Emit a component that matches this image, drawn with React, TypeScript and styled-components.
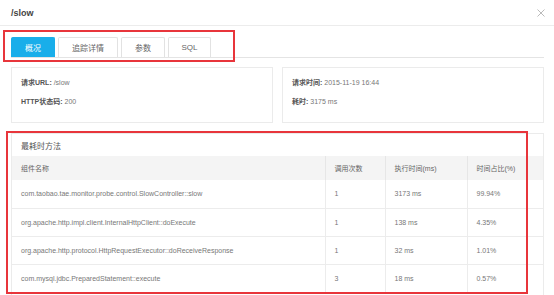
import React from "react";
import styled, { createGlobalStyle } from "styled-components";

const GlobalStyle = createGlobalStyle`
  html, body { margin: 0; padding: 0; background: #fff; }
  body { font-family: "Liberation Sans", "Noto Sans CJK SC", sans-serif; color: #666; }
  * { box-sizing: border-box; }
`;

const Modal = styled.div`
  position: relative;
  width: 554px;
  height: 295px;
  overflow: hidden;
  background: #fff;
`;

const Header = styled.div`
  height: 26px;
  display: flex;
  align-items: center;
  justify-content: space-between;
  padding: 0 9px 0 11px;
  border-bottom: 1px solid #ececec;
`;

const Title = styled.div`
  font-size: 9px;
  font-weight: 600;
  color: #444;
`;

const Close = styled.svg`
  width: 8px;
  height: 8px;
  margin-top: 0px;
`;

const Body = styled.div`
  padding: 0 10px 0 11px;
`;

const TabBar = styled.div`
  margin-top: 11px;
  display: flex;
  gap: 3px;
  border-bottom: 1px solid #e4e4e4;
`;

const Tab = styled.div<{ $active?: boolean; $w: number }>`
  width: ${(p) => p.$w}px;
  height: 20px;
  display: flex;
  align-items: center;
  justify-content: center;
  font-size: 8px;
  border: 1px solid ${(p) => (p.$active ? "#19aeea" : "#e2e2e2")};
  border-bottom: none;
  border-radius: 2px 2px 0 0;
  background: ${(p) => (p.$active ? "#19aeea" : "#fff")};
  color: ${(p) => (p.$active ? "#fff" : "#666")};
`;

const InfoGrid = styled.div`
  margin-top: 9px;
  display: grid;
  grid-template-columns: 262px 262px;
  column-gap: 9px;
`;

const InfoCard = styled.div`
  height: 56px;
  border: 1px solid #ebebeb;
  padding: 9px 9px 0;
  display: flex;
  flex-direction: column;
  gap: 7px;
`;

const InfoLine = styled.div`
  font-size: 7px;
  line-height: 12px;
  color: #777;
  white-space: nowrap;
`;

const Label = styled.span`
  font-weight: bold;
  color: #555;
`;

const TableCard = styled.div`
  margin-top: 10px;
  border: 1px solid #ebebeb;
  height: 170px;
`;

const CardTitle = styled.div`
  height: 22px;
  display: flex;
  align-items: center;
  padding-left: 9px;
  font-size: 8px;
  color: #555;
`;

const Table = styled.table`
  width: 100%;
  border-collapse: collapse;
  table-layout: fixed;
  font-size: 7px;
`;

const Th = styled.th<{ $w: number }>`
  width: ${(p) => p.$w}px;
  height: 24px;
  padding: 0 0 0 9px;
  text-align: left;
  font-weight: normal;
  color: #666;
  background: #f4f4f4;
  border-left: 1px solid #e6e6e6;
  &:first-child { border-left: none; }
`;

const Td = styled.td`
  height: 28px;
  padding: 0 0 0 9px;
  color: #777;
  white-space: nowrap;
  border-top: 1px solid #ececec;
  border-left: 1px solid #ececec;
  &:first-child { border-left: none; }
  tr:first-child > & { border-top: none; }
`;

const Annotation = styled.div<{ $x: number; $y: number; $w: number; $h: number }>`
  position: absolute;
  left: ${(p) => p.$x}px;
  top: ${(p) => p.$y}px;
  width: ${(p) => p.$w}px;
  height: ${(p) => p.$h}px;
  border: 2px solid #e8353b;
  pointer-events: none;
`;

const rows = [
  ["com.taobao.tae.monitor.probe.control.SlowController::slow", "1", "3173 ms", "99.94%"],
  ["org.apache.http.impl.client.InternalHttpClient::doExecute", "1", "138 ms", "4.35%"],
  ["org.apache.http.protocol.HttpRequestExecutor::doReceiveResponse", "1", "32 ms", "1.01%"],
  ["com.mysql.jdbc.PreparedStatement::execute", "3", "18 ms", "0.57%"],
];

export default function App() {
  return (
    <Modal>
      <GlobalStyle />
      <Header>
        <Title>/slow</Title>
        <Close viewBox="0 0 8 8">
          <path d="M0.5 0.5 L7.5 7.5 M7.5 0.5 L0.5 7.5" stroke="#a8a8a8" strokeWidth="0.8" fill="none" />
        </Close>
      </Header>
      <Body>
        <TabBar>
          <Tab $active $w={44}>概况</Tab>
          <Tab $w={60}>追踪详情</Tab>
          <Tab $w={44}>参数</Tab>
          <Tab $w={43}>SQL</Tab>
        </TabBar>
        <InfoGrid>
          <InfoCard>
            <InfoLine><Label>请求URL:</Label> /slow</InfoLine>
            <InfoLine><Label>HTTP状态码:</Label> 200</InfoLine>
          </InfoCard>
          <InfoCard>
            <InfoLine><Label>请求时间:</Label> 2015-11-19 16:44</InfoLine>
            <InfoLine><Label>耗时:</Label> 3175 ms</InfoLine>
          </InfoCard>
        </InfoGrid>
        <TableCard>
          <CardTitle>最耗时方法</CardTitle>
          <Table>
            <thead>
              <tr>
                <Th $w={313}>组件名称</Th>
                <Th $w={60}>调用次数</Th>
                <Th $w={82}>执行时间(ms)</Th>
                <Th $w={76}>时间占比(%)</Th>
              </tr>
            </thead>
            <tbody>
              {rows.map((r) => (
                <tr key={r[0]}>
                  {r.map((c, i) => (
                    <Td key={i}>{c}</Td>
                  ))}
                </tr>
              ))}
            </tbody>
          </Table>
        </TableCard>
      </Body>
      <Annotation $x={3} $y={30} $w={232} $h={32} />
      <Annotation $x={6} $y={131} $w={522} $h={163} />
    </Modal>
  );
}
